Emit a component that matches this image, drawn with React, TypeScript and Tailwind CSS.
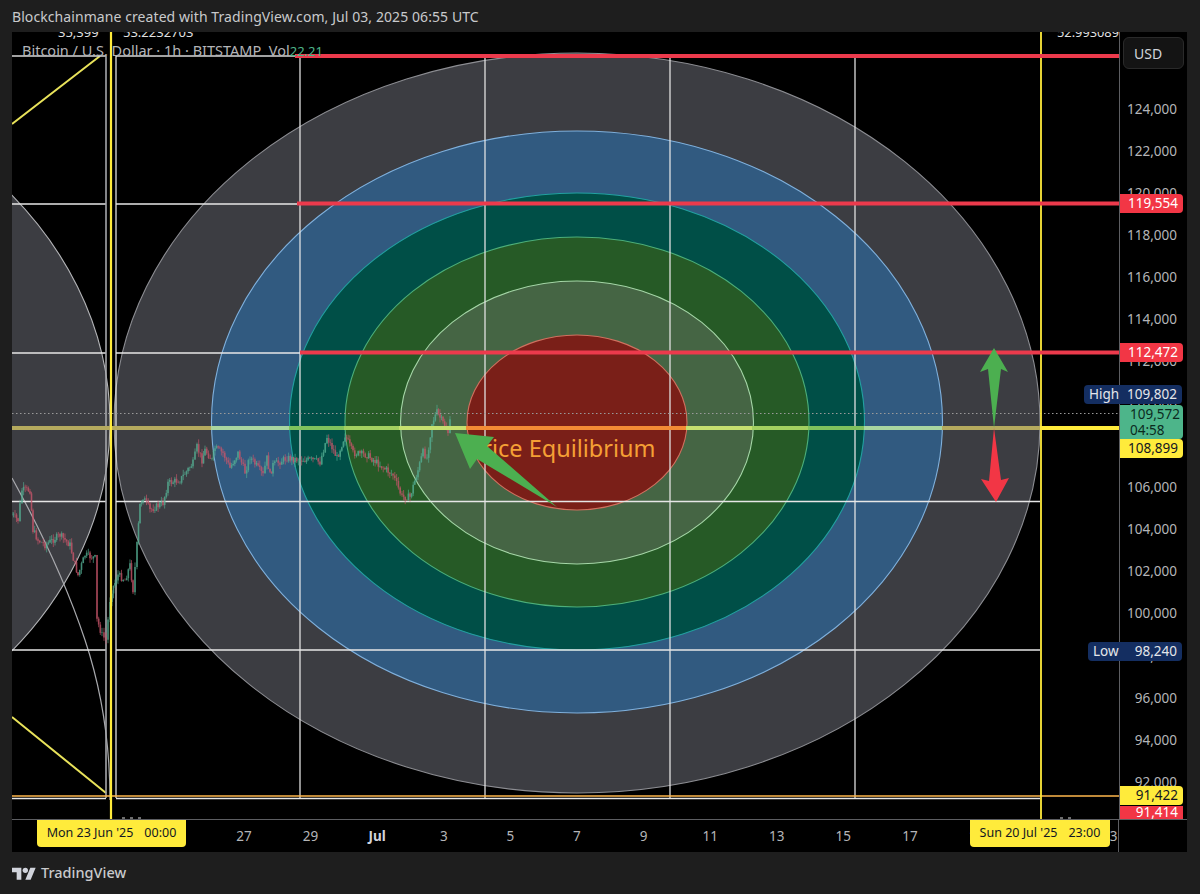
import React from 'react';

const waypoints: [number, number][] = [
	[12, 515], [18, 520], [22, 490], [30, 490], [33, 530], [38, 540], [45, 545], [60, 535], [70, 545], [75, 565],
	[78, 575], [85, 555], [95, 558], [97, 620], [102, 635], [106, 640], [110, 600], [112, 590], [118, 575], [125, 580],
	[130, 565], [133, 590], [137, 545], [140, 505], [143, 497], [150, 510], [163, 503], [168, 483], [180, 480], [193, 463],
	[197, 447], [202, 460], [205, 450], [212, 460], [215, 448], [223, 453], [230, 468], [238, 453], [245, 472], [250, 457],
	[263, 475], [267, 458], [270, 475], [273, 465], [287, 458], [300, 460], [313, 460], [320, 462], [327, 437], [337, 458],
	[345, 435], [353, 453], [367, 455], [380, 465], [393, 475], [402, 497], [410, 497], [418, 470], [423, 452], [427, 458],
	[432, 423], [437, 412], [443, 423], [448, 432], [452, 413],
];

type Candle = { x: number; open: number; close: number; high: number; low: number };

const buildCandles = () => {
	const out: Candle[] = [];
	let seed = 7;
	const rnd = () => {
		seed = (seed * 9301 + 49297) % 233280;
		return seed / 233280;
	};
	let prev = waypoints[0][1];
	for (let i = 0; i < waypoints.length - 1; i++) {
		const [x0, y0] = waypoints[i];
		const [x1, y1] = waypoints[i + 1];
		const n = Math.max(1, Math.round((x1 - x0) / 1.7));
		for (let j = 0; j < n; j++) {
			const t = j / n;
			const close = y0 + (y1 - y0) * t + (rnd() - 0.5) * 7;
			out.push({
				x: x0 + (x1 - x0) * t,
				open: prev,
				close,
				high: Math.min(prev, close) - rnd() * 5,
				low: Math.max(prev, close) + rnd() * 5,
			});
			prev = close;
		}
	}
	return out;
};

const candles = buildCandles();

const ellipses = [
	{ rx: 463, ry: 370, cy: 423, fill: '#3c3d42', stroke: '#8c8d92' },
	{ rx: 365.5, ry: 291, cy: 422, fill: '#315a80', stroke: '#7fb0dc' },
	{ rx: 287.5, ry: 228.5, cy: 421.5, fill: '#004f47', stroke: '#22a0a0' },
	{ rx: 232, ry: 185, cy: 422, fill: '#265a26', stroke: '#4caf7a' },
	{ rx: 176.5, ry: 141.5, cy: 422.5, fill: '#456544', stroke: '#a5d6a7' },
	{ rx: 110, ry: 87.5, cy: 422.5, fill: '#7a1f18', stroke: '#d0705f' },
];

const equilibrium: [number, number, string][] = [
	[12, 211, '#b5aa5e'],
	[211, 289, '#a9d6a0'],
	[289, 344, '#7fc25d'],
	[344, 399, '#a3d060'],
	[399, 466, '#c6e06f'],
	[466, 686, '#f38b35'],
	[686, 752, '#c6e06f'],
	[752, 808, '#a3d060'],
	[808, 864, '#7fc25d'],
	[864, 942, '#a9d6a0'],
	[942, 1040, '#b5aa5e'],
	[1040, 1119, '#ffeb3b'],
];

const priceTicks = [
	'124,000', '122,000', '120,000', '118,000', '116,000', '114,000', '112,000', '110,000',
	'108,000', '106,000', '104,000', '102,000', '100,000', '98,000', '96,000', '94,000', '92,000',
];

const dateTicks = ['27', '29', 'Jul', '3', '5', '7', '9', '11', '13', '15', '17', '19', '21', '23'];

const ChartDrawing = () => (
	<svg className="block h-[787px] w-[1107px] shrink-0" viewBox="12 32 1107 787">
		<ellipse cx={-353} cy={423} rx={463} ry={370} fill="#3c3d42" stroke="#b4b5b8" strokeWidth={1.1} />
		{ellipses.map((e) => (
			<ellipse key={e.rx} cx={577} cy={e.cy} rx={e.rx} ry={e.ry} fill={e.fill} stroke={e.stroke} strokeWidth={1.1} />
		))}
		<path d="M12 478Q60 565 85 640T110 800" fill="none" stroke="#a8a9ad" strokeWidth={1.2} />
		<path d="M12 124L100 56M12 717L106 793" fill="none" stroke="#e8e25a" strokeWidth={2} />

		{[204, 353, 501.5, 650, 798.5].map((y) => (
			<path key={y} d={`M12 ${y}H106M116 ${y}H1040`} stroke="#e6e6e6" strokeWidth={1.4} />
		))}
		<path d="M12 56H106M116 56H300" stroke="#d8d8d8" strokeWidth={1.4} />
		{[116, 300, 485, 670, 855].map((x) => (
			<path key={x} d={`M${x} 56V798`} stroke="#e6e6e6" strokeWidth={1.4} opacity={0.9} />
		))}
		<path d="M106 56V798" stroke="#a6a7ab" strokeWidth={1.6} />

		{candles.map((c) => (
			<g key={c.x} stroke={c.close < c.open ? '#55b094' : '#c9566b'} opacity={0.8}>
				<path d={`M${c.x} ${c.high}V${c.low}`} strokeWidth={0.8} />
				<path d={`M${c.x} ${c.open}V${c.close}`} strokeWidth={1.6} />
			</g>
		))}

		<path d="M12 413.5H1119" stroke="#9a9a9a" strokeWidth={1} strokeDasharray="1.5 2.5" />
		<path d="M12 796H1119" stroke="#ffb74d" strokeWidth={1.4} />
		{equilibrium.map(([a, b, color]) => (
			<path key={a} d={`M${a} 428H${b}`} stroke={color} strokeWidth={4} />
		))}
		<path d="M111 32V819" stroke="#ffeb3b" strokeWidth={2.2} />
		<path d="M1041 32V819" stroke="#ffeb3b" strokeWidth={1.8} />
		<path d="M295 56H1119M297 203.5H1119M300 352.5H1119" stroke="#ec3a4c" strokeWidth={4} />

		<text x={468} y={456.5} fill="#f5a035" fontSize={23.5} className="font-['Noto_Sans',sans-serif]">Price Equilibrium</text>
		<polygon points="455,433 494,437 487,446 557,507 477,459 470,469" fill="#4caf50" />
		<polygon points="994,348 1008,372 1001,369 994,428 988,369 980,372" fill="#4caf50" />
		<polygon points="994,428 1001,480 1009,478 996,502 981,479 989,481" fill="#f23645" />
		<path d="M122 818h3M130 818h3M138 818h3M1060 818h3M1068 818h3" stroke="#d8d8d8" strokeWidth={1} />
	</svg>
);

const PriceAxis = () => (
	<div className="relative h-[787px] flex-1 border-l border-[#5d5e62]">
		<div className="flex flex-col items-end pr-[10px] pt-[56px] text-[13.5px] text-[#b4b5b8]">
			{priceTicks.map((tick) => (
				<div className="flex h-[42.06px] shrink-0 items-center" key={tick}>{tick}</div>
			))}
		</div>
		<div className="absolute left-[3px] top-[5px] flex h-[32px] w-[61px] items-center rounded-md border border-[#2a2a2a] bg-[#141414] pl-[10px] text-[14px] text-[#d1d4dc]">USD</div>
		<div className="absolute left-0 top-[162px] flex h-[19px] w-[63px] items-center justify-end rounded-r-sm bg-[#f23645] pr-[5px] text-[13.5px] text-white">119,554</div>
		<div className="absolute left-0 top-[311px] flex h-[19px] w-[63px] items-center justify-end rounded-r-sm bg-[#f23645] pr-[5px] text-[13.5px] text-white">112,472</div>
		<div className="absolute right-[5px] top-[353px] flex h-[19px] w-[98px] items-center justify-between rounded-sm bg-[#142e61] px-[5px] text-[13.5px] text-[#e4e6ea]">
			<span>High</span>
			<span>109,802</span>
		</div>
		<div className="absolute left-0 top-[373px] flex h-[34px] w-[63px] flex-col justify-center rounded-r-sm bg-[#4db58a] pl-[10px] text-[13.5px] leading-[16px] text-[#0b2a1e]">
			<span>109,572</span>
			<span>04:58</span>
		</div>
		<div className="absolute left-0 top-[407px] flex h-[19px] w-[63px] items-center justify-end rounded-r-sm bg-[#ffeb3b] pr-[5px] text-[13.5px] text-[#131722]">108,899</div>
		<div className="absolute right-[5px] top-[610px] flex h-[19px] w-[94px] items-center justify-between rounded-sm bg-[#142e61] px-[5px] text-[13.5px] text-[#e4e6ea]">
			<span>Low</span>
			<span>98,240</span>
		</div>
		<div className="absolute left-0 top-[754px] flex h-[19px] w-[63px] items-center justify-end rounded-r-sm bg-[#ffeb3b] pr-[5px] text-[13.5px] text-[#131722]">91,422</div>
		<div className="absolute left-0 top-[774px] flex h-[13px] w-[63px] items-center justify-end overflow-hidden bg-[#f23645] pr-[5px] text-[13.5px] text-white">91,414</div>
	</div>
);

const TimeAxis = () => (
	<div className="relative flex h-[33px] shrink-0 border-t border-[#5d5e62]">
		<div className="flex w-[1107px] shrink-0 items-center border-r border-[#5d5e62] pl-[198.7px] text-[13.5px] text-[#b4b5b8]">
			{dateTicks.map((tick) => (
				<div className={tick === 'Jul' ? 'w-[66.6px] shrink-0 text-center font-bold text-[#d1d4dc]' : 'w-[66.6px] shrink-0 text-center'} key={tick}>{tick}</div>
			))}
		</div>
		<div className="absolute left-[25px] top-0 flex h-[27px] w-[149px] items-center justify-center gap-[11px] rounded-b-sm bg-[#ffeb3b] text-[12.5px] text-[#131722]">
			<span>Mon 23 Jun '25</span>
			<span>00:00</span>
		</div>
		<div className="absolute left-[958px] top-0 flex h-[27px] w-[140px] items-center justify-center gap-[11px] rounded-b-sm bg-[#ffeb3b] text-[12.5px] text-[#131722]">
			<span>Sun 20 Jul '25</span>
			<span>23:00</span>
		</div>
	</div>
);

const App = () => (
	<div className="flex h-[894px] w-[1200px] flex-col overflow-hidden bg-[#1e1e1e] font-['Noto_Sans',sans-serif]">
		<div className="flex h-8 shrink-0 items-center px-3 text-[14px] tracking-[0.08px] text-[#c9cacc]">
			Blockchainmane created with TradingView.com, Jul 03, 2025 06:55 UTC
		</div>
		<div className="relative ml-3 mr-[13px] flex h-[820px] shrink-0 flex-col overflow-hidden bg-black">
			<div className="flex h-[787px] shrink-0">
				<ChartDrawing />
				<PriceAxis />
			</div>
			<TimeAxis />
			<div className="absolute left-[46px] top-[-10px] text-[13px] leading-5 text-[#e0e0e0]">35,399</div>
			<div className="absolute left-[111px] top-[-10px] text-[13px] leading-5 text-[#e0e0e0]">53.2232703</div>
			<div className="absolute left-[1045px] top-[-10px] text-[12.8px] leading-5 text-[#e0e0e0]">52.993089</div>
			<div className="absolute left-[10px] top-[8px] flex items-baseline text-[14.5px] leading-5 text-[#b4b5b8]">
				<span className="whitespace-pre">Bitcoin / U.S. Dollar · 1h · BITSTAMP  Vol</span>
				<span className="text-[13px] text-[#4db58a]">22.21</span>
			</div>
		</div>
		<div className="flex flex-1 items-center gap-[5px] px-3 pb-px">
			<svg className="h-[16px] w-[24px]" viewBox="0 0 36 24" fill="#d1d4dc">
				<path d="M14 22H7V11H0V4h14v18zM28 22h-8l7.5-18h8L28 22z" />
				<circle cx="20" cy="8" r="4" />
			</svg>
			<span className="text-[14.5px] font-medium text-[#c9cacc]">TradingView</span>
		</div>
	</div>
);

export default App;
